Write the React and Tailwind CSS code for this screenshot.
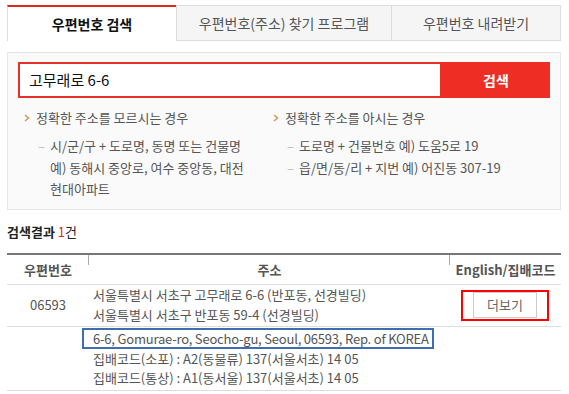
import { useState } from "react";

const font = { fontFamily: '"Noto Sans CJK KR", "Noto Sans", sans-serif' };

function Tip({ title, items, className = "" }) {
  return (
    <div className={className}>
      <p className="flex items-center text-[13px] text-[#555] leading-[18px]">
        <svg width="6" height="8" viewBox="0 0 6 8" className="mr-[6px]">
          <path d="M1 1 L4.5 4 L1 7" fill="none" stroke="#d39a5c" strokeWidth="1.6" />
        </svg>
        {title}
      </p>
      <ul className="mt-[8px] ml-[14px]">
        {items.map((it, i) => (
          <li key={i} className="flex text-[13px] text-[#555] leading-[21.5px]">
            <span className="text-[#bbb] w-[12px] shrink-0">–</span>
            <span>{it}</span>
          </li>
        ))}
      </ul>
    </div>
  );
}

export default function App() {
  const [query, setQuery] = useState("고무래로 6-6");

  return (
    <div className="w-[569px] h-[394px] bg-white px-[7px] pt-[5px] overflow-hidden" style={font}>
      {/* tabs */}
      <div className="flex h-[36px] w-[554px]">
        <div className="w-[169px] flex items-center justify-center bg-white border-t-2 border-t-[#e0261c] border-l border-[#ddd] text-[14px] font-bold text-[#111]">
          우편번호 검색
        </div>
        <div className="w-[216px] flex items-center justify-center bg-[#f5f5f5] border border-[#ddd] text-[14px] text-[#555]">
          우편번호(주소) 찾기 프로그램
        </div>
        <div className="flex-1 flex items-center justify-center bg-[#f5f5f5] border border-l-0 border-[#ddd] text-[14px] text-[#555]">
          우편번호 내려받기
        </div>
      </div>

      {/* search panel */}
      <div className="mt-[11px] w-[554px] h-[158px] bg-[#fafafa] border border-[#e6e6e6] px-[10px] pt-[9px]">
        <div className="flex h-[36px] w-[532px]">
          <input
            value={query}
            onChange={(e) => setQuery(e.target.value)}
            className="flex-1 border-2 border-[#e8302a] bg-white px-[9px] text-[15px] text-[#111] outline-none"
          />
          <button className="w-[108px] bg-[#ee2e24] text-white text-[14px] font-bold">검색</button>
        </div>
        <div className="flex mt-[11px] pl-[6px]">
          <Tip
            className="w-[249px]"
            title="정확한 주소를 모르시는 경우"
            items={[<>시/군/구 + 도로명, 동명 또는 건물명<br />예) 동해시 중앙로, 여수 중앙동, 대전<br />현대아파트</>]}
          />
          <Tip
            title="정확한 주소를 아시는 경우"
            items={["도로명 + 건물번호 예) 도움5로 19", "읍/면/동/리 + 지번 예) 어진동 307-19"]}
          />
        </div>
      </div>

      {/* result count */}
      <p className="mt-[13px] text-[13px] text-[#222] leading-[18px]">
        <span className="font-bold">검색결과</span> <span className="text-[#e0261c]">1</span>건
      </p>

      {/* table */}
      <table className="mt-[12px] w-[554px] border-collapse text-[13px] text-[#555]">
        <thead>
          <tr className="h-[30px] border-t-2 border-[#777] border-b border-b-[#ddd]">
            <th className="w-[82px] font-bold text-[#555] relative">
              우편번호
              <span className="absolute right-0 top-0 h-[10px] w-px bg-[#aaa]" />
            </th>
            <th className="w-[361px] font-bold text-[#555] relative">
              주소
              <span className="absolute right-0 top-0 h-[10px] w-px bg-[#aaa]" />
            </th>
            <th className="font-bold text-[#555]">English/집배코드</th>
          </tr>
        </thead>
        <tbody>
          <tr className="h-[42px] border-b border-[#ddd]">
            <td className="text-center">06593</td>
            <td className="pl-[4px] leading-[20px]">
              서울특별시 서초구 고무래로 6-6 (반포동, 선경빌딩)
              <br />
              서울특별시 서초구 반포동 59-4 (선경빌딩)
            </td>
            <td>
              <div className="ml-[11px] w-[88px] h-[31px] border-2 border-[#ff0000] flex items-center justify-center">
                <button className="w-[64px] h-[26px] border border-[#ccc] bg-white text-[13px] text-[#666]">더보기</button>
              </div>
            </td>
          </tr>
          <tr className="h-[64px] border-b border-[#ddd]">
            <td />
            <td className="pl-[4px] leading-[19px] align-top pt-[1px]">
              <span className="inline-block -ml-[11px] pl-[9px] pr-[3px] border-2 border-[#3d6fb0] leading-[17px] tracking-[-0.2px]">
                6-6, Gomurae-ro, Seocho-gu, Seoul, 06593, Rep. of KOREA
              </span>
              <br />
              집배코드(소포) : A2(동물류) 137(서울서초) 14 05
              <br />
              집배코드(통상) : A1(동서울) 137(서울서초) 14 05
            </td>
            <td />
          </tr>
        </tbody>
      </table>
    </div>
  );
}
